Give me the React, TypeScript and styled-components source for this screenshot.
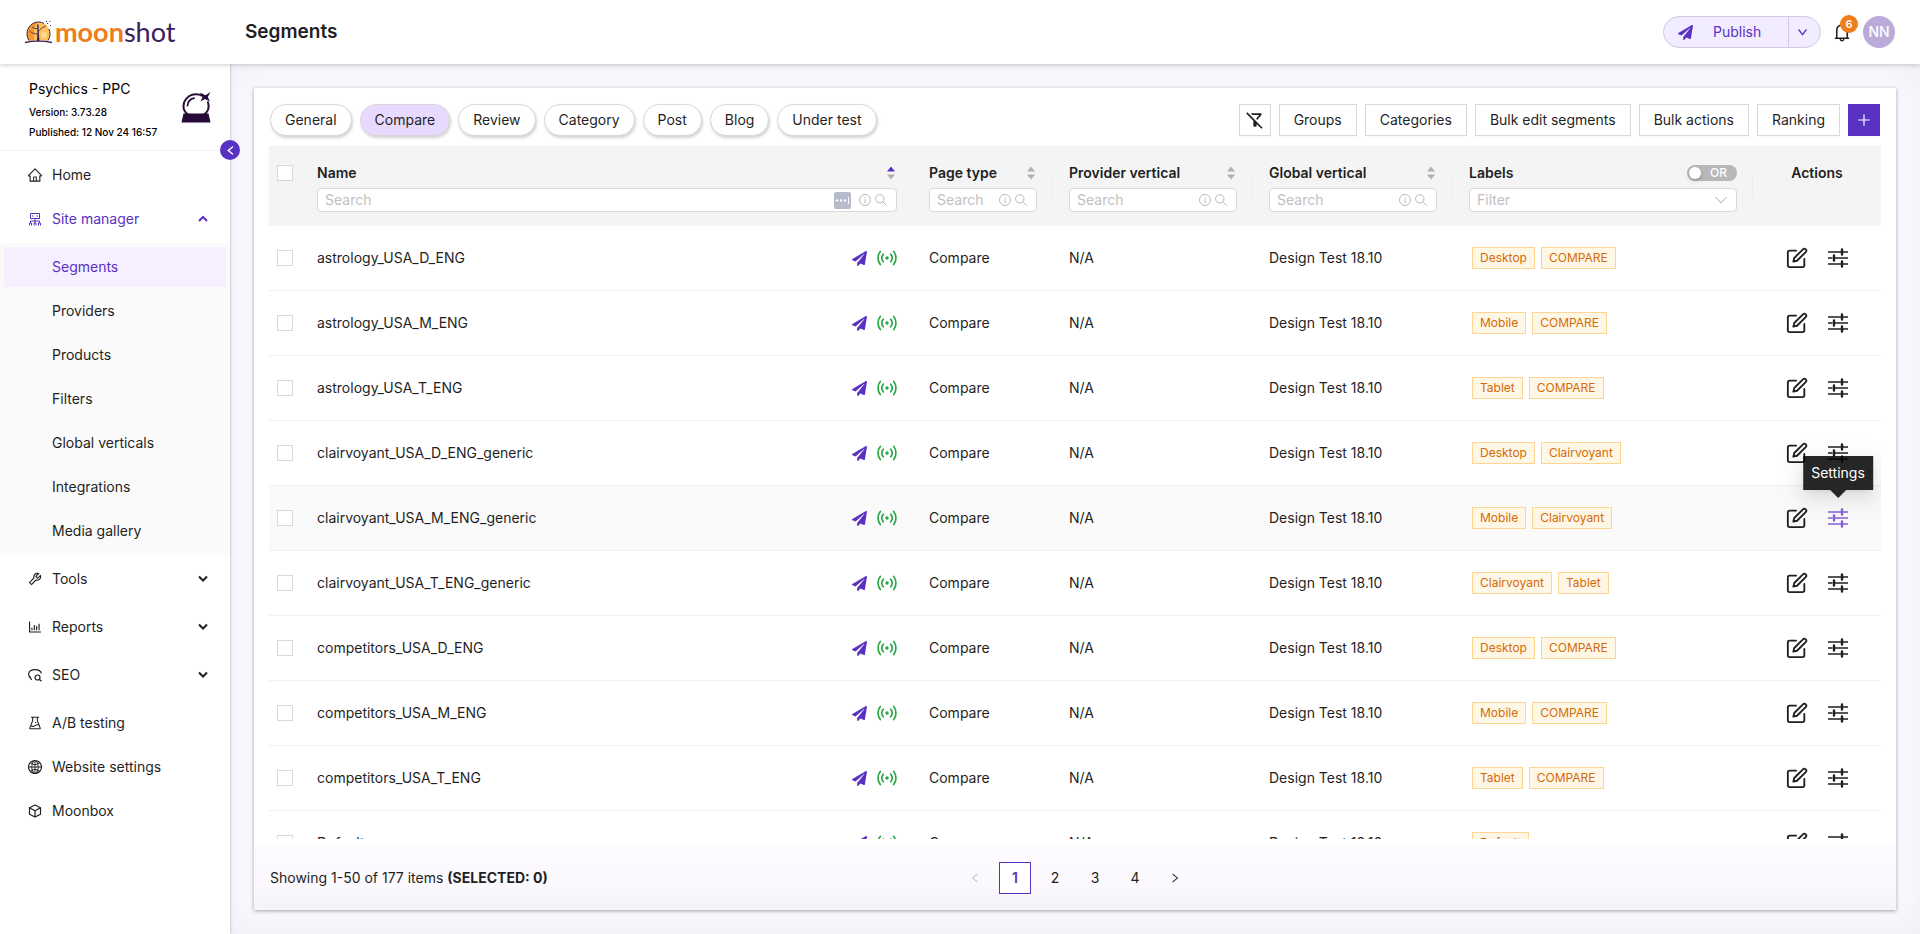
import React from 'react';
import styled, { createGlobalStyle, css } from 'styled-components';
import {
  AiOutlineHome,
  AiOutlineTool,
  AiOutlineBarChart,
  AiOutlineExperiment,
  AiOutlineGlobal,
  AiOutlineDown,
  AiOutlineLeft,
  AiOutlineRight,
  AiOutlinePlus,
  AiOutlineBell,
} from 'react-icons/ai';
import { FaPaperPlane } from 'react-icons/fa';
import { FiEdit } from 'react-icons/fi';
import { MdOutlineFilterAltOff } from 'react-icons/md';

const color = {
  primary: '#5a32c3',
  primaryHover: '#8560d8',
  text: '#1f1f1f',
  muted: '#bfbfbf',
  border: '#d9d9d9',
  line: '#f0f0f0',
  orange: '#ee7d1a',
  green: '#28a745',
};

const GlobalStyle = createGlobalStyle`
  *, *::before, *::after { box-sizing: border-box; }
  body {
    margin: 0;
    font-family: Inter, "Liberation Sans", sans-serif;
    font-size: 14px;
    line-height: 22px;
    color: ${color.text};
    background: #fff;
  }
  button, input, select { font: inherit; color: inherit; margin: 0; }
  button { cursor: pointer; }
  a { color: inherit; text-decoration: none; }
  svg { display: block; flex: none; }
`;

const Page = styled.div`
  display: flex;
  flex-direction: column;
  height: 100vh;
  overflow: hidden;
`;

const Header = styled.header`
  display: flex;
  align-items: center;
  flex: none;
  height: 64px;
  padding-right: 25px;
  background: #fff;
  box-shadow: 0 1px 5px rgba(0, 0, 0, 0.2);
  position: relative;
  z-index: 3;
`;

const Logo = styled.a`
  display: flex;
  align-items: center;
  gap: 3px;
  width: 245px;
  padding-left: 25px;
`;

const Wordmark = styled.span`
  font-family: Lato, sans-serif;
  font-size: 27px;
  line-height: 32px;
  font-weight: 700;
  color: ${color.orange};
`;

const WordmarkLight = styled.span`
  font-weight: 400;
  color: #37215a;
`;

const Title = styled.h1`
  flex: 1;
  margin: 0;
  font-size: 19px;
  line-height: 28px;
  font-weight: 600;
`;

const SplitButton = styled.div`
  display: flex;
  height: 32px;
  border: 1px solid #d2c9e6;
  border-radius: 16px;
  background: #f1ecff;
  color: ${color.primary};
  overflow: hidden;
`;

const PublishButton = styled.button`
  display: flex;
  align-items: center;
  gap: 20px;
  width: 124px;
  padding: 0 0 0 14px;
  border: 0;
  background: none;
`;

const PublishMenu = styled.button`
  display: flex;
  align-items: center;
  padding: 0 12px 0 8px;
  border: 0;
  border-left: 1px solid #d2c9e6;
  background: none;
`;

const Bell = styled.button`
  position: relative;
  margin-left: 10px;
  padding: 0;
  border: 0;
  background: none;
`;

const Badge = styled.span`
  position: absolute;
  top: -6px;
  right: -5px;
  width: 18px;
  height: 18px;
  border-radius: 9px;
  background: ${color.orange};
  color: #fff;
  font-size: 11px;
  line-height: 18px;
  font-weight: 600;
  text-align: center;
`;

const Avatar = styled.span`
  width: 32px;
  height: 32px;
  margin-left: 10px;
  border-radius: 50%;
  background: #baabd9;
  color: #fff;
  line-height: 32px;
  font-weight: 500;
  text-align: center;
`;

const Body = styled.div`
  display: flex;
  flex: 1;
  min-height: 0;
`;

const Sidebar = styled.aside`
  position: relative;
  z-index: 2;
  flex: none;
  width: 230px;
  background: #fff;
  box-shadow: 0 0 3px rgba(0, 0, 0, 0.28);
`;

const Project = styled.div`
  display: flex;
  align-items: center;
  justify-content: space-between;
  height: 87px;
  padding: 0 19px 0 29px;
  border-bottom: 1px solid ${color.line};
  color: #000;
`;

const ProjectInfo = styled.div`
  display: flex;
  flex-direction: column;
  padding-top: 4px;
`;

const ProjectName = styled.div`
  line-height: 26px;
`;

const ProjectMeta = styled.div`
  font-size: 10px;
  line-height: 20px;
  font-weight: 500;
`;

const Collapse = styled.button`
  position: absolute;
  top: 76px;
  right: -10px;
  display: flex;
  align-items: center;
  justify-content: center;
  width: 20px;
  height: 20px;
  padding: 0;
  border: 0;
  border-radius: 50%;
  background: ${color.primary};
  color: #fff;
`;

const Menu = styled.nav`
  padding-top: 4px;
`;

const itemStyle = css`
  display: flex;
  align-items: center;
  gap: 9px;
  height: 40px;
  margin: 0 4px 4px;
`;

const MenuLink = styled.a`
  ${itemStyle}
  padding-left: 23px;
`;

const Group = styled.div`
  & + & {
    padding-top: 4px;
  }
`;

const LinkList = styled.div`
  padding-top: 4px;
`;

const GroupTitle = styled.button<{ $open?: boolean }>`
  ${itemStyle}
  width: calc(100% - 8px);
  padding: 0 18px 0 23px;
  border: 0;
  background: none;
  color: ${(p) => (p.$open ? color.primary : color.text)};
`;

const GroupLabel = styled.span`
  flex: 1;
  text-align: left;
`;

const SubMenu = styled.div`
  padding-top: 4px;
  background: #fafafa;
  overflow: hidden;
`;

const SubLink = styled.a<{ $active?: boolean }>`
  ${itemStyle}
  padding-left: 48px;
  color: ${(p) => (p.$active ? color.primary : color.text)};
  background: ${(p) => (p.$active ? '#f5efff' : 'transparent')};
`;

const Content = styled.main`
  flex: 1;
  min-width: 0;
  padding: 24px;
  background: #fbf9ff;
  box-shadow: inset 0 0 36px rgba(60, 50, 80, 0.06);
`;

const Card = styled.section`
  display: flex;
  flex-direction: column;
  height: 100%;
  background: #fff;
  box-shadow: 0 1px 4px rgba(0, 0, 0, 0.35);
`;

const Toolbar = styled.div`
  display: flex;
  align-items: center;
  justify-content: space-between;
  padding: 16px 16px 10px;
`;

const Pills = styled.div`
  display: flex;
  gap: 8px;
`;

const Pill = styled.button<{ $active?: boolean }>`
  height: 32px;
  padding: 0 14px;
  border: 1px solid ${color.border};
  border-radius: 16px;
  background: ${(p) => (p.$active ? '#e8daff' : '#fff')};
  box-shadow: 1px 2px 3px rgba(0, 0, 0, 0.18);
`;

const Tools = styled.div`
  display: flex;
  gap: 8px;
`;

const ToolButton = styled.button<{ $icon?: boolean; $primary?: boolean }>`
  display: flex;
  align-items: center;
  justify-content: center;
  height: 32px;
  width: ${(p) => (p.$icon ? '32px' : 'auto')};
  padding: ${(p) => (p.$icon ? '0' : '0 14px')};
  border: 1px solid ${(p) => (p.$primary ? color.primary : color.border)};
  background: ${(p) => (p.$primary ? color.primary : '#fff')};
  color: ${(p) => (p.$primary ? '#fff' : color.text)};
  box-shadow: 0 2px 0 rgba(0, 0, 0, 0.02);
`;

const TableArea = styled.div`
  flex: 1;
  min-height: 0;
  margin: 0 15px 7px;
  overflow: hidden;
`;

const Table = styled.table`
  width: 100%;
  table-layout: fixed;
  border-collapse: separate;
  border-spacing: 0;
`;

const Th = styled.th<{ $divider?: boolean }>`
  position: relative;
  height: 80px;
  padding: 16px 16px 14px;
  background: #f4f4f4;
  font-weight: 600;
  text-align: left;
  vertical-align: top;
  ${(p) =>
    p.$divider &&
    css`
      &::after {
        content: '';
        position: absolute;
        top: 30px;
        right: 0;
        width: 1px;
        height: 22px;
        background: #ededed;
      }
    `}
`;

const CheckTh = styled(Th)`
  padding: 19px 8px 0;
`;

const ActionsTh = styled(Th)`
  text-align: center;
`;

const HeadLine = styled.div`
  display: flex;
  align-items: center;
  justify-content: space-between;
  height: 22px;
  margin-bottom: 4px;
`;

const SortButton = styled.button`
  padding: 0;
  border: 0;
  background: none;
`;

const Field = styled.div`
  display: flex;
  align-items: center;
  gap: 4px;
  height: 24px;
  padding: 0 9px 0 7px;
  border: 1px solid ${color.border};
  border-radius: 4px;
  background: #fff;
  color: #a6a6a6;
`;

const fieldReset = css`
  flex: 1;
  min-width: 0;
  padding: 0;
  border: 0;
  outline: 0;
  background: none;
  font-weight: 400;
  line-height: 20px;
`;

const SearchInput = styled.input`
  ${fieldReset}
  &::placeholder {
    color: ${color.muted};
    opacity: 1;
  }
`;

const FilterSelect = styled.select`
  ${fieldReset}
  appearance: none;
  color: ${color.muted};
`;

const AutofillMark = styled.span`
  display: flex;
  align-items: center;
  justify-content: center;
  width: 17px;
  height: 17px;
  margin-right: 4px;
  border-radius: 2px;
  background: #b6bccb;
`;

const Switch = styled.label`
  display: flex;
  align-items: center;
  width: 50px;
  height: 16px;
  padding: 0 10px 0 2px;
  border-radius: 8px;
  background: #b8b8b8;
  color: #fff;
  font-size: 12px;
  font-weight: 500;
  line-height: 16px;
  justify-content: space-between;
`;

const SwitchInput = styled.input`
  appearance: none;
  width: 12px;
  height: 12px;
  border-radius: 50%;
  background: #fff;
  box-shadow: 0 2px 4px rgba(0, 35, 11, 0.2);
`;

const Checkbox = styled.input`
  appearance: none;
  display: block;
  width: 16px;
  height: 16px;
  border: 1px solid ${color.border};
  background: #fff;
`;

const Td = styled.td`
  height: 65px;
  padding: 0 16px;
  border-bottom: 1px solid ${color.line};
`;

const CheckTd = styled(Td)`
  padding: 0 8px;
`;

const Row = styled.tr<{ $hovered?: boolean }>`
  background: ${(p) => (p.$hovered ? '#fafafa' : '#fff')};
`;

const NameCell = styled.div`
  display: flex;
  align-items: center;
  justify-content: space-between;
`;

const Status = styled.span`
  display: flex;
  align-items: center;
  gap: 10px;
`;

const Published = styled.span`
  color: ${color.primary};
`;

const Live = styled.span`
  color: ${color.green};
`;

const Tags = styled.div`
  display: flex;
  gap: 6px;
  padding-left: 3px;
`;

const Tag = styled.span`
  height: 22px;
  padding: 0 7px;
  border: 1px solid #ffd591;
  background: #fff7e6;
  color: #d46b08;
  font-size: 12px;
  line-height: 20px;
`;

const Actions = styled.div`
  display: flex;
  align-items: center;
  justify-content: center;
  gap: 20px;
`;

const ActionButton = styled.button<{ $hovered?: boolean }>`
  position: relative;
  padding: 0;
  border: 0;
  background: none;
  color: ${(p) => (p.$hovered ? color.primaryHover : color.text)};
`;

const Tooltip = styled.span`
  position: absolute;
  bottom: 38px;
  left: 50%;
  transform: translateX(-50%);
  z-index: 1;
  padding: 6px 8px;
  background: rgba(0, 0, 0, 0.85);
  color: #fff;
  white-space: nowrap;
  box-shadow:
    0 6px 16px rgba(0, 0, 0, 0.08),
    0 3px 6px -4px rgba(0, 0, 0, 0.12),
    0 9px 28px 8px rgba(0, 0, 0, 0.05);
  &::after {
    content: '';
    position: absolute;
    top: 100%;
    left: calc(50% - 8px);
    border: 8px solid transparent;
    border-top-color: #262626;
    border-bottom: 0;
  }
`;

const Footer = styled.footer`
  display: grid;
  grid-template-columns: 1fr auto 1fr;
  align-items: center;
  height: 64px;
  padding: 0 16px;
  background: linear-gradient(#fdfbff, #fbf9fe 60%, #f5f3f7);
`;

const Pager = styled.nav`
  display: flex;
  gap: 8px;
`;

const PageButton = styled.button<{ $active?: boolean }>`
  display: flex;
  align-items: center;
  justify-content: center;
  width: 32px;
  height: 32px;
  padding: 0;
  border: 1px solid ${(p) => (p.$active ? color.primary : 'transparent')};
  background: ${(p) => (p.$active ? '#fff' : 'transparent')};
  color: ${(p) => (p.$active ? color.primary : color.text)};
  font-weight: ${(p) => (p.$active ? 600 : 400)};
  &:disabled {
    color: ${color.muted};
  }
`;

const MoonLogo = () => (
  <svg width="27" height="24" viewBox="0 0 27 24" fill="none" aria-hidden="true">
    <path d="M4 20.5A11 11 0 0 1 2 14C2 7.5 7 2 13.5 2S25 7.5 25 14c0 2.5-.8 4.8-2 6.5z" fill="#fcc15c" />
    <path d="M4 20.5A11 11 0 0 1 2 14C2 7.5 7 2 13 2c-3 3-5 8-4 18.5z" fill="#f39a2e" />
    <circle cx="19" cy="15" r="3" fill="#fedb8c" />
    <path d="M4 20.5A11 11 0 0 1 2 14C2 7.5 7 2 13.5 2c2 0 4 .5 5.500 1.500M24 9c.7 1.500 1 3.300 1 5 0 2.500-.8 4.800-2 6.500" stroke="#37215a" />
    <path d="M0 22.5c4-.8 8-1.300 13.500-1.300S23 21.700 27 22.500" stroke="#37215a" strokeWidth="1.300" />
    <path d="M11.8 21c.8-5 .8-11 .2-16.500h1.500c.3 5.500.3 11.500 1 16.500z" fill="#37215a" />
    <path d="M13.3 11.5c2-2.500 4.500-4.500 7.500-5.500M12.500 8.500c-2 .2-4-.2-5.500-1.500M12.500 14c-3 0-6-1-8-3" stroke="#37215a" strokeWidth=".8" />
    <path d="M22 3.500h1.200M24.500 1.500h1M25 5.500h1M21 1.500h1" stroke="#37215a" />
  </svg>
);

const CrystalBall = () => (
  <svg width="30" height="31" viewBox="0 0 30 31" fill="none" aria-hidden="true">
    <path d="M7 22.5C4 20.5 2.500 17.600 2.500 14.500 2.500 7.800 8 2.300 15 2.300c2.400 0 4.400.5 6.200 1.600M26.700 9.500c.6 1.500.9 3.200.9 5 0 3.200-1.600 6-4.600 8" stroke="#260a38" strokeWidth="2" />
    <path d="M6.500 13.500C7 9.500 9.500 7 13 6.200" stroke="#260a38" strokeWidth="1.800" strokeLinecap="round" />
    <path d="M2.500 21.500h25l2 9H.5z" fill="#260a38" />
    <path d="M19 .5l5.500 2.700L29.500 0l-2.700 5 2.200 4.500-5-2.500L19.500 9.500l2-4.500z" fill="#260a38" />
  </svg>
);

const SiteMapIcon = () => (
  <svg width="16" height="16" viewBox="0 0 16 16" fill="none" stroke="currentColor" aria-hidden="true">
    <path d="M3.500 2.500h9v5h-9zM5 5h1.500M9.500 5H11M8 7.500V10M3.500 12v-2h9v2M8 10v2" />
    <path d="M2.500 14.500V12h2v2.500M7 14.500V12h2v2.500M11.500 14.500V12h2v2.500" />
  </svg>
);

const SeoIcon = () => (
  <svg width="16" height="16" viewBox="0 0 16 16" fill="none" stroke="currentColor" strokeWidth="1.200" aria-hidden="true">
    <path d="M4 11.500C2.500 10.500 1.600 8.800 1.600 7 1.600 4.500 4.500 2.600 8 2.600S14.200 4 14.200 6.500M3 9.500l1.500 3.500" />
    <circle cx="10.500" cy="10.500" r="2.500" />
    <path d="M12.500 12.500l2 1.800" />
  </svg>
);

const CubeIcon = () => (
  <svg width="16" height="16" viewBox="0 0 16 16" fill="none" stroke="currentColor" strokeWidth="1.200" strokeLinejoin="round" aria-hidden="true">
    <path d="M8 2l5.500 2.800v6.400L8 14l-5.500-2.800V4.800z" />
    <path d="M2.500 4.800L8 7.800l5.500-3M8 7.800V14" />
  </svg>
);

const BroadcastIcon = () => (
  <svg width="20" height="16" viewBox="0 0 20 16" fill="none" stroke="currentColor" strokeWidth="1.700" strokeLinecap="round" aria-hidden="true">
    <circle cx="10" cy="8" r="1.700" fill="currentColor" stroke="none" />
    <path d="M3.300 1.500C.3 5 .3 11 3.300 14.500M6.300 4.200c-1.800 2.200-1.800 5.400 0 7.600M16.700 1.500c3 3.500 3 9.500 0 13M13.700 4.200c1.800 2.200 1.800 5.400 0 7.600" />
  </svg>
);

const Chevron = ({ up }: { up?: boolean }) => (
  <svg width="10" height="8" viewBox="0 0 10 8" fill="none" stroke="currentColor" strokeWidth="2" aria-hidden="true">
    <path d={up ? 'M1 6l4-4 4 4' : 'M1 1.500l4 4 4-4'} />
  </svg>
);

const SortIcon = ({ asc }: { asc?: boolean }) => (
  <svg width="11" height="14" viewBox="0 0 11 14" aria-hidden="true">
    <path d="M5 .5L9 5.500H1z" fill={asc ? color.primary : '#b0b0b0'} />
    <path d="M5 13.500L9 8.500H1z" fill="#b0b0b0" />
  </svg>
);

const InfoIcon = () => (
  <svg width="12" height="12" viewBox="0 0 12 12" fill="none" stroke="currentColor" strokeWidth=".8" aria-hidden="true">
    <circle cx="6" cy="6" r="5.500" />
    <path d="M6 5v4M6 3v1" />
  </svg>
);

const SearchIcon = () => (
  <svg width="12" height="12" viewBox="0 0 12 12" fill="none" stroke="currentColor" strokeWidth=".8" aria-hidden="true">
    <circle cx="4.800" cy="4.800" r="4.200" />
    <path d="M7.800 7.800l4 4" />
  </svg>
);

const SelectArrow = () => (
  <svg width="12" height="12" viewBox="0 0 12 12" fill="none" stroke="currentColor" strokeWidth=".9" aria-hidden="true">
    <path d="M.5 3l5.500 6 5.500-6" />
  </svg>
);

const SlidersIcon = () => (
  <svg width="20" height="20" viewBox="0 0 20 20" fill="none" stroke="currentColor" aria-hidden="true">
    <path d="M0 4h13M15 4h5M0 10h4.500M7 10h13M0 16h13M15 16h5" strokeWidth="1.500" />
    <path d="M14 1.500v5M6 7.500v5M14 13.500v5" strokeWidth="2.400" strokeLinecap="round" />
  </svg>
);

const AutofillDots = () => (
  <svg width="15" height="7" viewBox="0 0 15 7" fill="#fff" aria-hidden="true">
    <circle cx="2" cy="3.500" r="1.200" />
    <circle cx="6" cy="3.500" r="1.200" />
    <circle cx="10" cy="3.500" r="1.200" />
    <path d="M13 0h1v7h-1z" />
  </svg>
);

const pills = ['General', 'Compare', 'Review', 'Category', 'Post', 'Blog', 'Under test'];
const subItems = ['Segments', 'Providers', 'Products', 'Filters', 'Global verticals', 'Integrations', 'Media gallery'];
const tools = ['Groups', 'Categories', 'Bulk edit segments', 'Bulk actions', 'Ranking'];

const closedGroups = [
  { label: 'Tools', icon: <AiOutlineTool size={16} /> },
  { label: 'Reports', icon: <AiOutlineBarChart size={16} /> },
  { label: 'SEO', icon: <SeoIcon /> },
];

const links = [
  { label: 'A/B testing', icon: <AiOutlineExperiment size={16} /> },
  { label: 'Website settings', icon: <AiOutlineGlobal size={16} /> },
  { label: 'Moonbox', icon: <CubeIcon /> },
];

const rows: { name: string; tags: string[]; hovered?: boolean }[] = [
  { name: 'astrology_USA_D_ENG', tags: ['Desktop', 'COMPARE'] },
  { name: 'astrology_USA_M_ENG', tags: ['Mobile', 'COMPARE'] },
  { name: 'astrology_USA_T_ENG', tags: ['Tablet', 'COMPARE'] },
  { name: 'clairvoyant_USA_D_ENG_generic', tags: ['Desktop', 'Clairvoyant'] },
  { name: 'clairvoyant_USA_M_ENG_generic', tags: ['Mobile', 'Clairvoyant'], hovered: true },
  { name: 'clairvoyant_USA_T_ENG_generic', tags: ['Clairvoyant', 'Tablet'] },
  { name: 'competitors_USA_D_ENG', tags: ['Desktop', 'COMPARE'] },
  { name: 'competitors_USA_M_ENG', tags: ['Mobile', 'COMPARE'] },
  { name: 'competitors_USA_T_ENG', tags: ['Tablet', 'COMPARE'] },
  { name: 'Default', tags: ['Default'] },
];

const SearchColumn = ({ title, asc, autofill, divider }: { title: string; asc?: boolean; autofill?: boolean; divider?: boolean }) => (
  <Th $divider={divider}>
    <HeadLine>
      {title}
      <SortButton aria-label={`Sort by ${title}`}>
        <SortIcon asc={asc} />
      </SortButton>
    </HeadLine>
    <Field>
      <SearchInput type="text" placeholder="Search" aria-label={`Search ${title}`} />
      {autofill && (
        <AutofillMark>
          <AutofillDots />
        </AutofillMark>
      )}
      <InfoIcon />
      <SearchIcon />
    </Field>
  </Th>
);

export default function App() {
  return (
    <Page>
      <GlobalStyle />
      <Header>
        <Logo href="#" aria-label="moonshot">
          <MoonLogo />
          <Wordmark>
            moon<WordmarkLight>shot</WordmarkLight>
          </Wordmark>
        </Logo>
        <Title>Segments</Title>
        <SplitButton>
          <PublishButton>
            <FaPaperPlane size={15} />
            Publish
          </PublishButton>
          <PublishMenu aria-label="Publish options">
            <AiOutlineDown size={11} strokeWidth={60} />
          </PublishMenu>
        </SplitButton>
        <Bell aria-label="Notifications">
          <AiOutlineBell size={22} />
          <Badge>6</Badge>
        </Bell>
        <Avatar>NN</Avatar>
      </Header>
      <Body>
        <Sidebar>
          <Project>
            <ProjectInfo>
              <ProjectName>Psychics - PPC</ProjectName>
              <ProjectMeta>Version: 3.73.28</ProjectMeta>
              <ProjectMeta>Published: 12 Nov 24 16:57</ProjectMeta>
            </ProjectInfo>
            <CrystalBall />
          </Project>
          <Collapse aria-label="Collapse menu">
            <AiOutlineLeft size={11} strokeWidth={60} />
          </Collapse>
          <Menu>
            <MenuLink href="#">
              <AiOutlineHome size={16} />
              Home
            </MenuLink>
            <Group>
              <GroupTitle $open>
                <SiteMapIcon />
                <GroupLabel>Site manager</GroupLabel>
                <Chevron up />
              </GroupTitle>
              <SubMenu>
                {subItems.map((item) => (
                  <SubLink key={item} href="#" $active={item === 'Segments'}>
                    {item}
                  </SubLink>
                ))}
              </SubMenu>
            </Group>
            {closedGroups.map((group) => (
              <Group key={group.label}>
                <GroupTitle>
                  {group.icon}
                  <GroupLabel>{group.label}</GroupLabel>
                  <Chevron />
                </GroupTitle>
              </Group>
            ))}
            <LinkList>
              {links.map((link) => (
                <MenuLink key={link.label} href="#">
                  {link.icon}
                  {link.label}
                </MenuLink>
              ))}
            </LinkList>
          </Menu>
        </Sidebar>
        <Content>
          <Card>
            <Toolbar>
              <Pills>
                {pills.map((pill) => (
                  <Pill key={pill} $active={pill === 'Compare'}>
                    {pill}
                  </Pill>
                ))}
              </Pills>
              <Tools>
                <ToolButton $icon aria-label="Clear filters">
                  <MdOutlineFilterAltOff size={20} />
                </ToolButton>
                {tools.map((tool) => (
                  <ToolButton key={tool}>{tool}</ToolButton>
                ))}
                <ToolButton $icon $primary aria-label="Add segment">
                  <AiOutlinePlus size={16} />
                </ToolButton>
              </Tools>
            </Toolbar>
            <TableArea>
              <Table>
                <colgroup>
                  <col width="32" />
                  <col />
                  <col width="140" />
                  <col width="200" />
                  <col width="200" />
                  <col width="300" />
                  <col width="128" />
                </colgroup>
                <thead>
                  <tr>
                    <CheckTh>
                      <Checkbox type="checkbox" aria-label="Select all" />
                    </CheckTh>
                    <SearchColumn title="Name" asc autofill />
                    <SearchColumn title="Page type" divider />
                    <SearchColumn title="Provider vertical" divider />
                    <SearchColumn title="Global vertical" divider />
                    <Th $divider>
                      <HeadLine>
                        Labels
                        <Switch>
                          <SwitchInput type="checkbox" role="switch" />
                          OR
                        </Switch>
                      </HeadLine>
                      <Field>
                        <FilterSelect aria-label="Filter labels">
                          <option>Filter</option>
                        </FilterSelect>
                        <SelectArrow />
                      </Field>
                    </Th>
                    <ActionsTh>Actions</ActionsTh>
                  </tr>
                </thead>
                <tbody>
                  {rows.map((row) => (
                    <Row key={row.name} $hovered={row.hovered}>
                      <CheckTd>
                        <Checkbox type="checkbox" aria-label={`Select ${row.name}`} />
                      </CheckTd>
                      <Td>
                        <NameCell>
                          {row.name}
                          <Status>
                            <Published>
                              <FaPaperPlane size={15} />
                            </Published>
                            <Live>
                              <BroadcastIcon />
                            </Live>
                          </Status>
                        </NameCell>
                      </Td>
                      <Td>Compare</Td>
                      <Td>N/A</Td>
                      <Td>Design Test 18.10</Td>
                      <Td>
                        <Tags>
                          {row.tags.map((tag) => (
                            <Tag key={tag}>{tag}</Tag>
                          ))}
                        </Tags>
                      </Td>
                      <Td>
                        <Actions>
                          <ActionButton aria-label="Edit">
                            <FiEdit size={22} />
                          </ActionButton>
                          <ActionButton aria-label="Settings" $hovered={row.hovered}>
                            <SlidersIcon />
                            {row.hovered && <Tooltip role="tooltip">Settings</Tooltip>}
                          </ActionButton>
                        </Actions>
                      </Td>
                    </Row>
                  ))}
                </tbody>
              </Table>
            </TableArea>
            <Footer>
              <span>
                Showing 1-50 of 177 items <strong>(SELECTED: 0)</strong>
              </span>
              <Pager aria-label="Pagination">
                <PageButton disabled aria-label="Previous page">
                  <AiOutlineLeft size={12} />
                </PageButton>
                <PageButton $active>1</PageButton>
                <PageButton>2</PageButton>
                <PageButton>3</PageButton>
                <PageButton>4</PageButton>
                <PageButton aria-label="Next page">
                  <AiOutlineRight size={12} />
                </PageButton>
              </Pager>
            </Footer>
          </Card>
        </Content>
      </Body>
    </Page>
  );
}
